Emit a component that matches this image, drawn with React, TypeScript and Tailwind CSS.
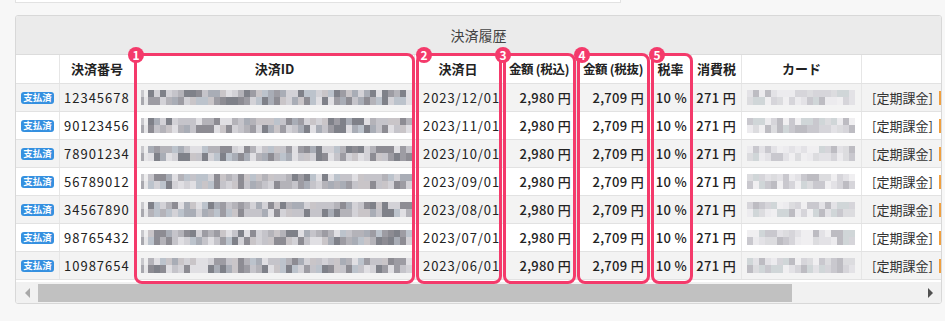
import React from "react";

function rng(seed: number) {
  let a = seed >>> 0;
  return () => {
    a |= 0;
    a = (a + 0x6d2b79f5) | 0;
    let t = Math.imul(a ^ (a >>> 15), 1 | a);
    t = (t + Math.imul(t ^ (t >>> 7), 61 | t)) ^ t;
    return ((t ^ (t >>> 14)) >>> 0) / 4294967296;
  };
}

const darkPal = ["#9d9ca3", "#b4b3b9", "#c5c4ca", "#8d8c93", "#d3d2d7", "#a9adb6", "#bcc3cc", "#7f8189", "#c9c5c8", "#e0dfe3"];
const lightPal = ["#d6d5da", "#e3e2e6", "#c9c8ce", "#ecebee", "#bdbcc2", "#d0d6d8", "#dcdcdf", "#f0eff1"];

function Mosaic({ seed, count, light }: { seed: number; count: number; light?: boolean }) {
  const r = rng(seed);
  const pal = light ? lightPal : darkPal;
  const blocks = Array.from({ length: count }, (_, i) => {
    const pick = () => pal[Math.floor(r() * pal.length)];
    if (!light && i === 0) return { t: "#c8c8cc", b: "#a8a8ae", w: 3 };
    if (!light && i === 1) return { t: "#eeeeef", b: "#e6e6e8", w: 4 };
    return { t: pick(), b: pick(), w: 6 };
  });
  return (
    <div className="flex h-[15px]">
      {blocks.map((bl, i) => (
        <div key={i} className="flex flex-col" style={{ width: bl.w }}>
          <div className="h-[7px]" style={{ background: bl.t }} />
          <div className="h-[8px]" style={{ background: bl.b }} />
        </div>
      ))}
    </div>
  );
}

const rows = [
  ["12345678", "2023/12/01"],
  ["90123456", "2023/11/01"],
  ["78901234", "2023/10/01"],
  ["56789012", "2023/09/01"],
  ["34567890", "2023/08/01"],
  ["98765432", "2023/07/01"],
  ["10987654", "2023/06/01"],
];

function Box({ left, width, n, cx }: { left: number; width: number; n: number; cx: number }) {
  return (
    <>
      <div
        className="absolute top-[53px] h-[231px] rounded-[8px] border-[3px] border-[#f43a6b] pointer-events-none"
        style={{ left, width }}
      />
      <div
        className="absolute top-[47px] w-[16px] h-[16px] rounded-full bg-[#f43a6b] text-white text-[12px] font-bold leading-none flex items-center justify-center"
        style={{ left: cx - 8 }}
      >
        {n}
      </div>
    </>
  );
}

export default function App() {
  return (
    <div className="relative w-[945px] h-[321px] overflow-hidden bg-[#f7f7f7] font-['Noto_Sans_CJK_JP','Noto_Sans',sans-serif] text-[#222]">
      <div className="ml-[15px] w-[606px] h-[3px] bg-white border-x border-b border-[#e2e2e2]" />
      <div className="mt-[12px] ml-[15px] w-[927px] border border-[#d8d8d8] rounded-[3px] bg-white overflow-hidden">
        <div className="h-[39px] bg-[#ebebeb] border-b border-[#dcdcdc] flex items-center justify-center text-[14px] text-[#444]">
          決済履歴
        </div>
        <div className="overflow-hidden">
          <div className="w-[1100px] text-[13px]">
            <div className="flex h-[29px] bg-white border-b border-[#e2e2e2] font-bold">
              <div className="w-[44px] border-r border-[#e6e6e6]" />
              <div className="w-[75px] border-r border-[#e6e6e6] flex items-center justify-center">決済番号</div>
              <div className="w-[280px] border-r border-[#e6e6e6] flex items-center justify-center">決済ID</div>
              <div className="w-[87px] border-r border-[#e6e6e6] flex items-center justify-center">決済日</div>
              <div className="w-[75px] border-r border-[#e6e6e6] flex items-center justify-center whitespace-nowrap text-[12.5px] tracking-[-0.3px]">金額 (税込)</div>
              <div className="w-[73px] border-r border-[#e6e6e6] flex items-center justify-center whitespace-nowrap text-[12.5px] tracking-[-0.3px]">金額 (税抜)</div>
              <div className="w-[42px] border-r border-[#e6e6e6] flex items-center justify-center">税率</div>
              <div className="w-[50px] border-r border-[#e6e6e6] flex items-center justify-center">消費税</div>
              <div className="w-[120px] border-r border-[#e6e6e6] flex items-center justify-center">カード</div>
              <div className="w-[160px] border-r border-[#e6e6e6]" />
            </div>
            {rows.map(([num, date], i) => (
              <div
                key={num}
                className={`flex h-[28px] border-b border-[#e2e2e2] ${i % 2 === 0 ? "bg-[#f3f3f3]" : "bg-white"}`}
              >
                <div className="w-[44px] border-r border-[#e6e6e6] flex items-center justify-center">
                  <span className="w-[33px] h-[12px] rounded-[3px] bg-[#3590e0] text-white text-[9.5px] font-bold leading-none flex items-center justify-center">
                    支払済
                  </span>
                </div>
                <div className="w-[75px] border-r border-[#e6e6e6] flex items-center pl-[4px] tracking-[1px] whitespace-nowrap">{num}</div>
                <div className="w-[280px] border-r border-[#e6e6e6] flex items-center pl-[6px]">
                  <Mosaic seed={i * 17 + 3} count={46} />
                </div>
                <div className="w-[87px] border-r border-[#e6e6e6] flex items-center justify-end pr-[1px] tracking-[0.9px] whitespace-nowrap">
                  {date}
                </div>
                <div className="w-[75px] border-r border-[#e6e6e6] flex items-center justify-end pr-[5px] font-medium tracking-[0.3px] whitespace-nowrap">
                  2,980 円
                </div>
                <div className="w-[73px] border-r border-[#e6e6e6] flex items-center justify-end pr-[5px] font-medium tracking-[0.3px] whitespace-nowrap">
                  2,709 円
                </div>
                <div className="w-[42px] border-r border-[#e6e6e6] flex items-center justify-end pr-[4px] font-medium tracking-[0.3px] whitespace-nowrap">
                  10 %
                </div>
                <div className="w-[50px] border-r border-[#e6e6e6] flex items-center justify-end pr-[5px] font-medium tracking-[0.3px] whitespace-nowrap">
                  271 円
                </div>
                <div className="w-[120px] border-r border-[#e6e6e6] flex items-center pl-[5px]">
                  <Mosaic seed={i * 31 + 101} count={18} light />
                </div>
                <div className="w-[160px] border-r border-[#e6e6e6] flex items-center pl-[10px] whitespace-nowrap text-[#333]">
                  [定期課金]
                  <span className="ml-[6px] w-[14px] h-[14px] border-l-2 border-[#f0a040]" />
                </div>
              </div>
            ))}
          </div>
        </div>
        <div className="mt-[2px] h-[21px] bg-[#f1f1f1] flex items-center">
          <div className="w-[22px] flex items-center justify-center">
            <div className="w-0 h-0 border-y-[5px] border-y-transparent border-r-[5px] border-r-[#a8a8a8]" />
          </div>
          <div className="w-[754px] h-[18px] bg-[#c1c1c1]" />
          <div className="flex-1" />
          <div className="w-[22px] flex items-center justify-center">
            <div className="w-0 h-0 border-y-[5px] border-y-transparent border-l-[5px] border-l-[#505050]" />
          </div>
        </div>
      </div>

      <Box left={134} width={281} n={1} cx={136} />
      <Box left={416} width={86} n={2} cx={424} />
      <Box left={503} width={73} n={3} cx={503} />
      <Box left={577} width={73} n={4} cx={582} />
      <Box left={651} width={42} n={5} cx={657} />
    </div>
  );
}
